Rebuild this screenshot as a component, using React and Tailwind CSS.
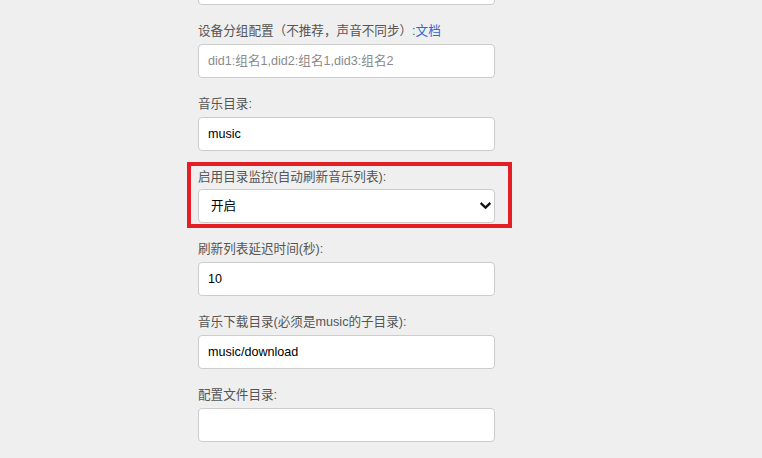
import React from "react";

const font = { fontFamily: '"Liberation Sans","Noto Sans CJK SC",sans-serif' };

function Label({ children }) {
  return (
    <label className="block h-[18px] mb-[4px] text-[12.6px] leading-[18px] text-[#555555] whitespace-nowrap">
      {children}
    </label>
  );
}

function Field({ value, placeholder }) {
  return (
    <input
      readOnly
      value={value}
      placeholder={placeholder}
      className="block w-full h-[34px] rounded-[4px] border border-[#cccccc] bg-white px-[9px] text-[12.6px] text-black placeholder:text-[#8a8a8a] outline-none"
      style={font}
    />
  );
}

export default function App() {
  return (
    <div className="min-h-[458px] w-full bg-[#efefef] overflow-hidden" style={font}>
      <div className="w-[297px] ml-[198px] mt-[-29px] flex flex-col">
        <div className="mb-[17px]">
          <Field value="" />
        </div>

        <div className="mb-[17px]">
          <Label>
            设备分组配置（不推荐，声音不同步）:<span className="text-[#2a6bd8]">文档</span>
          </Label>
          <Field value="" placeholder="did1:组名1,did2:组名1,did3:组名2" />
        </div>

        <div className="mb-[17px]">
          <Label>音乐目录:</Label>
          <Field value="music" />
        </div>

        <div className="mb-[17px] relative">
          <Label>启用目录监控(自动刷新音乐列表):</Label>
          <div className="relative h-[34px] mt-[-1px]">
            <select
              className="appearance-none block w-full h-[34px] rounded-[4px] border border-[#cccccc] bg-white pl-[12px] text-[12.6px] text-black outline-none"
              style={font}
              defaultValue="on"
            >
              <option value="on">开启</option>
              <option value="off">关闭</option>
            </select>
            <svg
              className="absolute right-[4px] top-[13px] pointer-events-none"
              width="11"
              height="8"
              viewBox="0 0 11 8"
            >
              <polyline
                points="1.5,1.8 5.5,5.6 9.5,1.8"
                fill="none"
                stroke="#111"
                strokeWidth="2.4"
                strokeLinecap="square"
              />
            </svg>
          </div>
          <div className="absolute top-[-6px] bottom-[-5px] left-[-11px] right-[-17px] border-4 border-[#e31e24] pointer-events-none" />
        </div>

        <div className="mb-[17px]">
          <Label>刷新列表延迟时间(秒):</Label>
          <Field value="10" />
        </div>

        <div className="mb-[17px]">
          <Label>音乐下载目录(必须是music的子目录):</Label>
          <Field value="music/download" />
        </div>

        <div className="mb-[17px]">
          <Label>配置文件目录:</Label>
          <Field value="" />
        </div>
      </div>
    </div>
  );
}
